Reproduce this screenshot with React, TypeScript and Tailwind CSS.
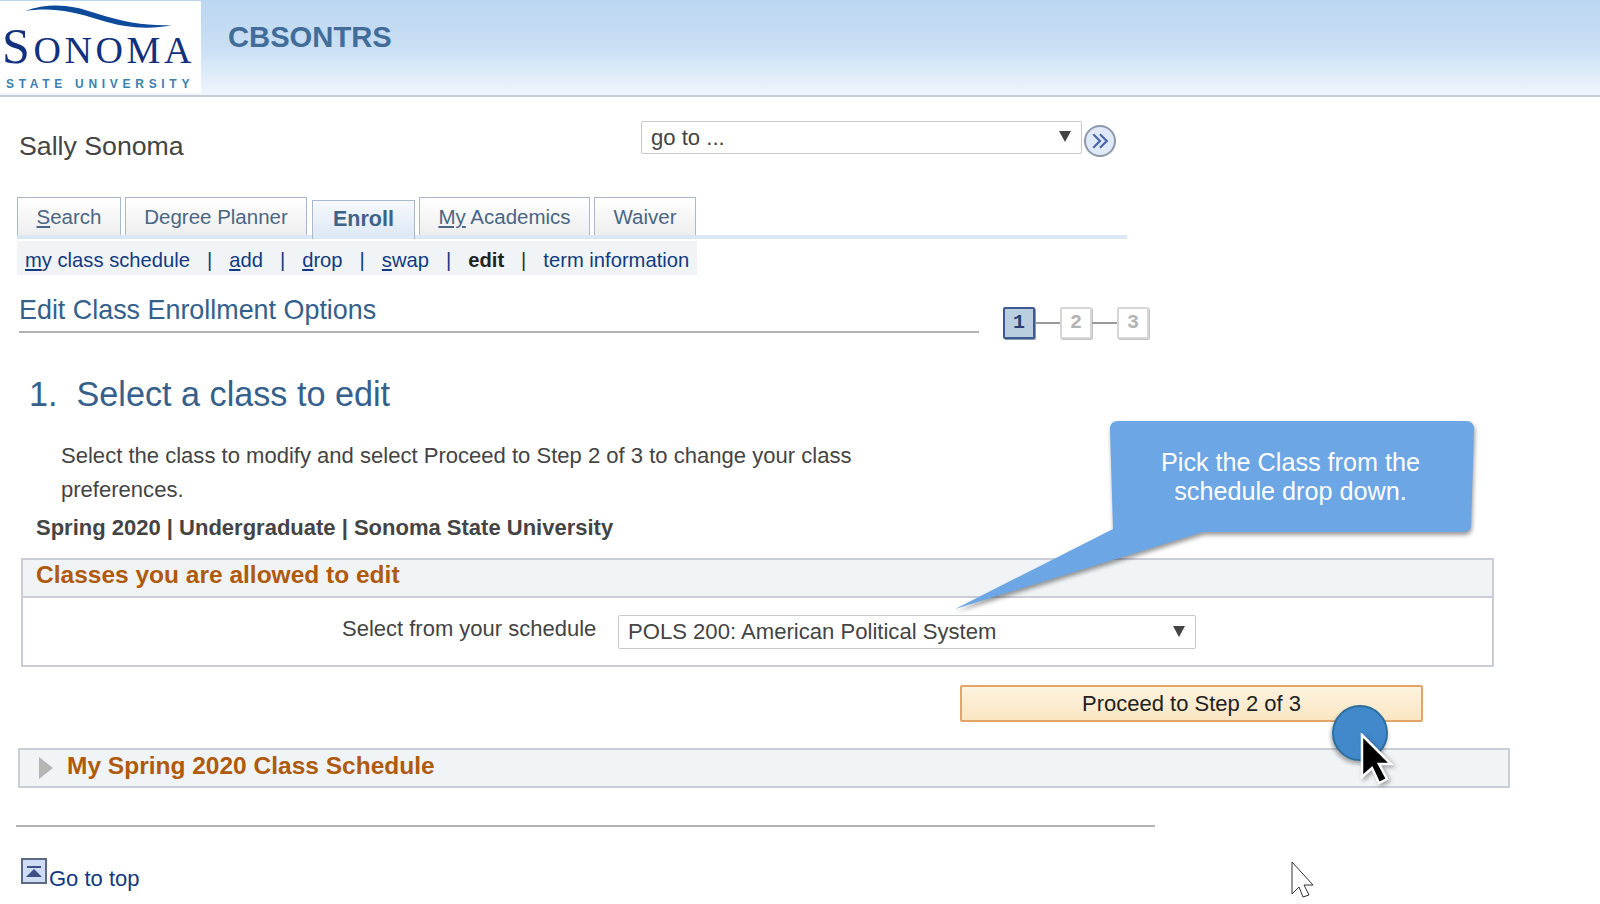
const SANS = "font-['Liberation_Sans',Arial,sans-serif]";

function Logo() {
  return (
    <div className="relative mt-px h-[92px] w-[201px] shrink-0 overflow-hidden bg-white">
      <svg viewBox="0 0 201 92" className="absolute left-0 top-0 h-[92px] w-[201px]">
        <path d="M25 10 C50 1 72 4 95 12 C125 22 150 25 172 24 C150 29 125 27 100 19 C72 10 50 6 25 10 Z" fill="#0d4a9a" />
      </svg>
      <div className="absolute left-[2px] top-[21px] whitespace-nowrap font-['Liberation_Serif',serif] text-[38px] leading-[48px] tracking-[3.6px] text-[#12307e]">
        <span className="text-[50px]">S</span>ONOMA
      </div>
      <div className="absolute left-[6px] top-[75px] whitespace-nowrap font-['Liberation_Sans',sans-serif] text-[12px] font-bold leading-[16px] tracking-[4.7px] text-[#3b7fb0]">
        STATE&nbsp;UNIVERSITY
      </div>
    </div>
  );
}

function Tab({ label, mnemonic, width }: { label: string; mnemonic?: string; width: string }) {
  const rest = mnemonic ? label.slice(mnemonic.length) : label;
  return (
    <div className={`flex h-[38px] items-center justify-center whitespace-pre border border-b-0 border-[#a9b8cc] bg-gradient-to-b from-white to-[#eeeeee] pt-[2px] text-[20.5px] text-[#4a6684] ${width}`}>
      <span>
        {mnemonic && <span className="underline">{mnemonic}</span>}
        {rest}
      </span>
    </div>
  );
}

function ActiveTab({ label }: { label: string }) {
  return (
    <div className="relative z-10 mt-[3px] flex h-[39px] w-[103px] items-center justify-center border border-b-0 border-[#a9b8cc] bg-gradient-to-b from-[#f6f9fc] to-[#dce8f5] pb-[2px] text-[21.5px] font-bold text-[#3f6287]">
      {label}
    </div>
  );
}

function SubLink({ first, rest }: { first: string; rest: string }) {
  return (
    <span className="text-[#123a82]">
      <span className="underline">{first}</span>
      {rest}
    </span>
  );
}

function Sep({ dark }: { dark?: boolean }) {
  return <span className={`mx-[17px] ${dark ? "text-[#333]" : "text-[#123a82]"}`}>|</span>;
}

function SelectBox({ text, className }: { text: string; className: string }) {
  return (
    <div className={`flex items-center justify-between rounded-[2px] border border-[#c9c9c9] bg-white pl-[9px] pr-[10px] text-[22.1px] text-[#444] ${className}`}>
      <span>{text}</span>
      <svg viewBox="0 0 12 12" className="mb-[3px] h-[12px] w-[12px]">
        <path d="M0 1 H12 L6 12 Z" fill="#444" />
      </svg>
    </div>
  );
}

function Step({ n, active }: { n: string; active?: boolean }) {
  return (
    <div
      className={`flex h-[32px] w-[32px] items-center justify-center rounded-[2px] border-2 font-['Liberation_Mono',monospace] text-[20px] font-bold ${
        active
          ? "border-[#3c5a90] bg-[#b9cfe0] text-[#2a3f70] shadow-[1px_1px_0_#8a9ab5]"
          : "border-[#d6d6d6] bg-white text-[#b3b3b3] shadow-[1px_1px_0_#c4c4c4]"
      }`}
    >
      {n}
    </div>
  );
}

function Callout() {
  return (
    <div className="absolute left-[955px] top-[421px] h-[190px] w-[520px]">
      <svg viewBox="0 0 520 190" className="absolute left-0 top-0 h-[190px] w-[520px] drop-shadow-[1px_3px_2px_rgba(0,0,0,0.4)]">
        <path
          d="M163 0 H511 Q519 0 519 8 L516 104 Q516 111 508 111 H248 L0 188 L158 108 L155 8 Q155 0 163 0 Z"
          fill="#6ca6e5"
        />
      </svg>
      <div className="absolute left-[155px] top-[27px] w-[361px] text-center text-[25.2px] leading-[29px] text-white">
        Pick the Class from the
        <br />
        schedule drop down.
      </div>
    </div>
  );
}

function ClickMarker() {
  return (
    <>
      <div className="absolute left-[1332px] top-[705px] h-[56px] w-[56px] rounded-full border-2 border-[#2d6f9f] bg-[#4289cc] shadow-[-1px_3px_4px_rgba(0,0,0,0.35)]" />
      <svg viewBox="0 0 34 52" className="absolute left-[1360px] top-[733px] h-[52px] w-[34px] drop-shadow-[2px_2px_2px_rgba(0,0,0,0.35)]">
        <path d="M2 2 L31 31 L19 31 L27 46 L19 50 L12 35 L2 44 Z" fill="#000" stroke="#fff" strokeWidth="2.5" />
      </svg>
      <svg viewBox="0 0 24 38" className="absolute left-[1291px] top-[861px] h-[38px] w-[24px]">
        <path d="M1 1 L22 24 L13 24 L18 34 L12 36 L8 26 L1 33 Z" fill="#fff" stroke="#333" strokeWidth="1" />
      </svg>
    </>
  );
}

export default function App() {
  return (
    <div className={`relative h-[904px] w-[1600px] overflow-hidden bg-white ${SANS}`}>
      {/* banner */}
      <header className="flex h-[97px] items-start border-b-2 border-[#c6ccd6] bg-gradient-to-b from-[#bcd7f1] via-[#c9dff4] to-[#f0f6fd]">
        <Logo />
        <h1 className="ml-[27px] mt-[20px] text-[29.2px] font-bold leading-[34px] text-[#426d99]">CBSONTRS</h1>
      </header>

      {/* name + go to */}
      <div className="flex h-[100px] items-start pl-[19px]">
        <div className="mt-[33px] w-[622px] text-[26.7px] leading-[32px] text-[#444]">Sally Sonoma</div>
        <SelectBox text="go to ..." className="mt-[24px] h-[33px] w-[441px]" />
        <div className="ml-[2px] mt-[28px] flex h-[32px] w-[32px] items-center justify-center rounded-full border-2 border-[#8d99ab] bg-[#dfe9f8]">
          <svg viewBox="0 0 16 16" className="h-[18px] w-[18px]" fill="none" stroke="#4d66a8" strokeWidth="2">
            <path d="M2 2 L8 8 L2 14 M8 2 L14 8 L8 14" />
          </svg>
        </div>
      </div>

      {/* tabs */}
      <div className="ml-[17px] w-[1110px]">
        <div className="flex h-[38px]">
          <Tab label="Search" mnemonic="S" width="w-[104px]" />
          <div className="ml-[4px]">
            <Tab label="Degree Planner" width="w-[182px]" />
          </div>
          <div className="ml-[5px]">
            <ActiveTab label="Enroll" />
          </div>
          <div className="ml-[4px]">
            <Tab label="My Academics" mnemonic="My" width="w-[171px]" />
          </div>
          <div className="ml-[4px]">
            <Tab label="Waiver" width="w-[102px]" />
          </div>
        </div>
        <div className="h-[4px] bg-[#dce7f5]" />
        <div className="mt-[2px] flex h-[34px] w-[680px] items-center whitespace-nowrap bg-[#f0f4f6] pl-[8px] pt-[5px] text-[20.2px]">
          <SubLink first="m" rest="y class schedule" />
          <Sep />
          <SubLink first="a" rest="dd" />
          <Sep />
          <SubLink first="d" rest="rop" />
          <Sep />
          <SubLink first="s" rest="wap" />
          <Sep />
          <span className="font-bold text-[#222]">edit</span>
          <Sep dark />
          <span className="text-[#123a82]">term information</span>
        </div>
      </div>

      {/* title + steps */}
      <div className="flex items-start pl-[19px]">
        <div className="h-[58px] w-[960px] border-b-2 border-[#b3b3b3] pt-[19px] text-[26.9px] leading-[32px] text-[#35608c]">
          Edit Class Enrollment Options
        </div>
        <div className="ml-[24px] mt-[32px] flex items-center">
          <Step n="1" active />
          <div className="h-[2px] w-[25px] bg-[#9a9a9a]" />
          <Step n="2" />
          <div className="h-[2px] w-[25px] bg-[#9a9a9a]" />
          <Step n="3" />
        </div>
      </div>

      <h2 className="ml-[29px] mt-[33px] whitespace-pre text-[34.2px] leading-[44px] text-[#35608c]">1.  Select a class to edit</h2>

      <p className="ml-[61px] mt-[23px] w-[810px] text-[22.05px] leading-[34px] text-[#444]">
        Select the class to modify and select Proceed to Step 2 of 3 to change your class preferences.
      </p>
      <div className="ml-[36px] mt-[6px] text-[22px] font-bold leading-[30px] text-[#444]">
        Spring 2020 | Undergraduate | Sonoma State University
      </div>

      {/* classes box */}
      <section className="ml-[21px] mt-[15px] h-[109px] w-[1473px] border-2 border-[#c9ced6]">
        <div className="h-[38px] border-b-2 border-[#c9ced6] bg-[#f0f4f6] pl-[13px] text-[24.5px] font-bold leading-[30px] text-[#af5a0c]">
          Classes you are allowed to edit
        </div>
        <div className="flex items-start">
          <div className="ml-[319px] mt-[16px] w-[276px] text-[22px] leading-[30px] text-[#444]">Select from your schedule</div>
          <SelectBox text="POLS 200: American Political System" className="mt-[17px] h-[34px] w-[578px]" />
        </div>
      </section>

      <div className="ml-[960px] mt-[18px] flex h-[37px] w-[463px] items-center justify-center rounded-[2px] border-2 border-[#e3a468] bg-gradient-to-b from-[#fdf3df] to-[#fbe6c3] text-[22px] text-[#222]">
        Proceed to Step 2 of 3
      </div>

      {/* collapsed schedule */}
      <section className="ml-[18px] mt-[26px] flex h-[40px] w-[1492px] items-center border-2 border-[#c9ced6] bg-[#f0f4f6]">
        <svg viewBox="0 0 14 22" className="ml-[19px] h-[22px] w-[14px]">
          <path d="M0 0 L14 11 L0 22 Z" fill="#b5b5b5" />
        </svg>
        <span className="mb-[3px] ml-[14px] text-[24.5px] font-bold text-[#af5a0c]">My Spring 2020 Class Schedule</span>
      </section>

      <div className="ml-[16px] mt-[37px] h-[2px] w-[1139px] bg-[#b3b3b3]" />

      {/* footer link */}
      <div className="ml-[21px] mt-[31px] flex items-end">
        <div className="flex h-[26px] w-[26px] flex-col items-center justify-center gap-[1px] border-2 border-[#5c6a85] bg-[#cfdcf5]">
          <div className="h-[2px] w-[14px] bg-[#3d4f86]" />
          <div className="h-0 w-0 border-x-[8px] border-b-[8px] border-x-transparent border-b-[#3d4f86]" />
        </div>
        <span className="mb-[-10px] ml-[2px] text-[22px] leading-[30px] text-[#123a82]">Go to top</span>
      </div>

      <Callout />
      <ClickMarker />
    </div>
  );
}
